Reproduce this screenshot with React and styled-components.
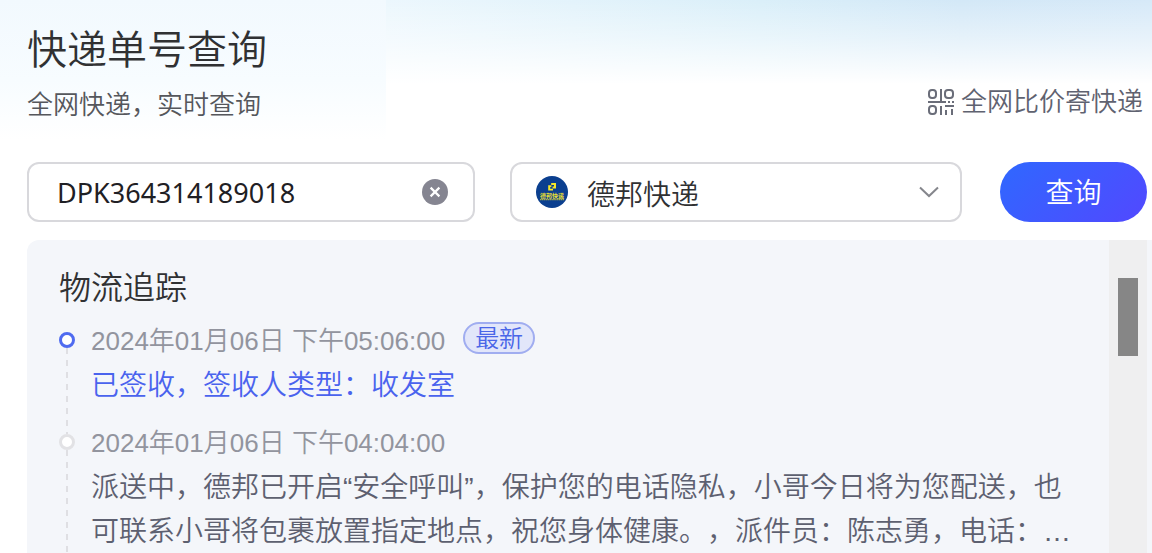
import React, { useState } from "react";
import styled, { createGlobalStyle, css } from "styled-components";

const GlobalStyle = createGlobalStyle`
  *, *::before, *::after { box-sizing: border-box; }
  body {
    margin: 0;
    background: #fff;
    color: #303133;
    font-family: "Liberation Sans", "Noto Sans CJK SC", sans-serif;
    font-weight: 350;
    text-spacing-trim: space-all;
  }
  h1, h2, p, ol { margin: 0; padding: 0; font-weight: inherit; }
  input, select, button { font: inherit; color: inherit; }
`;

const Page = styled.main`
  display: flex;
  flex-direction: column;
  height: 100vh;
  min-height: 480px;
  overflow: hidden;
  padding-left: 27px;
  background:
    linear-gradient(180deg, #f2f9fe 0, #f7fcff 80px, #fff 140px) 0 0 / 386px 140px no-repeat,
    linear-gradient(180deg, rgba(255, 255, 255, 0) 0, rgba(255, 255, 255, 0.45) 40px, #fff 84px) 386px 0 / 100% 140px no-repeat,
    linear-gradient(90deg, #fff 0, #ecf7fd 386px, #daeff9 760px, #d3e8f7 960px, #d6e9f8 100%) 0 0 / 100% 84px no-repeat,
    #fff;
`;

const Header = styled.header`
  display: flex;
  justify-content: space-between;
  align-items: flex-end;
  height: 124px;
  padding-right: 9px;
`;

const Title = styled.h1`
  font-size: 40px;
  line-height: 60px;
`;

const Subtitle = styled.p`
  margin-top: 6px;
  font-size: 26px;
  line-height: 38px;
  color: #55575c;
`;

const CompareLink = styled.a`
  display: flex;
  align-items: center;
  gap: 6px;
  padding-bottom: 3px;
  font-size: 26px;
  line-height: 38px;
  color: #5f6270;
  text-decoration: none;
`;

const SearchForm = styled.form`
  display: flex;
  gap: 38px;
  margin-top: 38px;
  padding-right: 5px;
`;

const Fields = styled.div`
  display: grid;
  grid-template-columns: minmax(0, 448fr) minmax(0, 452fr);
  flex: 1;
  gap: 35px;
`;

const Field = styled.div`
  display: flex;
  align-items: center;
  height: 60px;
  padding: 0 ${(p) => p.$right}px 0 ${(p) => p.$left}px;
  border: 2px solid #d8d8dc;
  border-radius: 12px;
  background: #fff;
`;

const NumberInput = styled.input`
  flex: 1;
  min-width: 0;
  padding: 0;
  border: 0;
  outline: 0;
  background: none;
  color: #1f2024;
  font-family: "Noto Sans", sans-serif;
  font-size: 27px;
  font-weight: 400;
`;

const ClearButton = styled.button`
  display: flex;
  padding: 0;
  border: 0;
  background: none;
  cursor: pointer;
`;

const CarrierSelect = styled.select`
  flex: 1;
  min-width: 0;
  margin-left: 19px;
  padding: 6px 0 0;
  border: 0;
  outline: 0;
  appearance: none;
  background: none;
  font-size: 28px;
`;

const SubmitButton = styled.button`
  width: 147px;
  height: 60px;
  padding: 0 0 2px;
  border: 0;
  border-radius: 30px;
  background: linear-gradient(135deg, #2f68ff, #5248ff);
  color: #fff;
  font-size: 28px;
  cursor: pointer;
`;

const Panel = styled.section`
  display: flex;
  flex: 1;
  min-height: 0;
  margin-top: 18px;
  padding-right: 5px;
  overflow: hidden;
  border-top-left-radius: 12px;
  background: #f4f6fa;
`;

const Tracking = styled.div`
  display: flex;
  flex-direction: column;
  flex: 1;
  min-width: 0;
  padding: 24px 32px 0;
`;

const PanelTitle = styled.h2`
  font-size: 32px;
  line-height: 48px;
`;

const Timeline = styled.ol`
  display: flex;
  flex-direction: column;
  flex: 1;
  margin-top: 6px;
  list-style: none;
`;

const Event = styled.li`
  display: flex;
  gap: 16px;
  flex: ${(p) => (p.$last ? "1 0 auto" : "none")};
`;

const Rail = styled.div`
  display: flex;
  flex-direction: column;
  align-items: center;
  flex: none;
  width: 16px;
  margin-bottom: -14px;
  padding-top: 14px;
`;

const Dot = styled.span`
  flex: none;
  width: 16px;
  height: 16px;
  border: 3px solid ${(p) => (p.$active ? "#4f6bf0" : "#e2e2e5")};
  border-radius: 50%;
  background: #fff;
`;

const Dashes = styled.span`
  flex: 1;
  width: 2px;
  background: repeating-linear-gradient(180deg, #dfdfe3 0 6px, transparent 6px 12px);
`;

const EventBody = styled.div`
  flex: 1;
  min-width: 0;
  padding-bottom: 12px;
`;

const EventTime = styled.div`
  display: flex;
  align-items: center;
  gap: 18px;
  height: 40px;
  color: #92949e;
  font-size: 26px;
`;

const LatestBadge = styled.span`
  height: 32px;
  padding: 0 10px;
  border: 2px solid #a0adf0;
  border-radius: 16px;
  background: #e2e6fa;
  color: #4a66e8;
  font-size: 24px;
  line-height: 30px;
`;

const EventText = styled.p`
  margin-top: 6px;
  font-size: 28px;
  line-height: 44px;
  ${(p) =>
    p.$active
      ? css`
          color: #4a63ee;
        `
      : css`
          color: #5d6070;
        `}
`;

const ScrollTrack = styled.div`
  flex: none;
  width: 38px;
  padding: 38px 9px 0;
  background: #efeff0;
`;

const ScrollThumb = styled.div`
  height: 78px;
  background: #868686;
`;

function CodeIcon() {
  return (
    <svg width="28" height="28" viewBox="0 0 28 28" fill="none" stroke="#6a6d79" strokeWidth="2" aria-hidden="true">
      <rect x="2" y="2" width="7" height="8" rx="3" />
      <rect x="18" y="2" width="8" height="8" rx="3" />
      <rect x="2" y="18" width="7" height="8" rx="3" />
      <path d="M14 1v13M1 14h18M21 14h2M25 14h2M14 18v9M18 18h9M19 22v5M25 21v6" />
    </svg>
  );
}

function ClearIcon() {
  return (
    <svg width="26" height="26" viewBox="0 0 26 26" aria-hidden="true">
      <circle cx="13" cy="13" r="13" fill="#858591" />
      <path d="M8.6 8.6l8.8 8.8M17.4 8.6l-8.8 8.8" stroke="#fff" strokeWidth="2.2" />
    </svg>
  );
}

function CarrierLogo() {
  return (
    <svg width="32" height="32" viewBox="0 0 32 32" aria-hidden="true">
      <circle cx="16" cy="16" r="16" fill="#0b3f8f" />
      <path d="M15.2 7h4.8v5.4h-3.4v-1.8h1.4V9h-2.8zM17 14.6h-4.8V9.2h3.2V11h-1.2v1.7H17z" fill="#f5e829" />
      <text x="16" y="21.8" textAnchor="middle" fontSize="6" fontWeight="700" fill="#e8df35">德邦快递</text>
      <path d="M4 23.6h24" stroke="#a9b04e" strokeWidth="1.4" strokeDasharray="1.4 .5" />
    </svg>
  );
}

function ChevronIcon() {
  return (
    <svg width="20" height="12" viewBox="0 0 20 12" fill="none" stroke="#85868c" strokeWidth="2" aria-hidden="true">
      <path d="M1 1.5l9 8.5 9-8.5" />
    </svg>
  );
}

const events = [
  { time: "2024年01月06日 下午05:06:00", text: "已签收，签收人类型：收发室", latest: true },
  {
    time: "2024年01月06日 下午04:04:00",
    text: "派送中，德邦已开启“安全呼叫”，保护您的电话隐私，小哥今日将为您配送，也可联系小哥将包裹放置指定地点，祝您身体健康。，派件员：陈志勇，电话：…",
  },
];

export default function App() {
  const [number, setNumber] = useState("DPK364314189018");
  return (
    <>
      <GlobalStyle />
      <Page lang="zh-CN">
        <Header>
          <div>
            <Title>快递单号查询</Title>
            <Subtitle>全网快递，实时查询</Subtitle>
          </div>
          <CompareLink href="#compare">
            <CodeIcon />
            全网比价寄快递
          </CompareLink>
        </Header>
        <SearchForm onSubmit={(e) => e.preventDefault()}>
          <Fields>
            <Field $left={28} $right={25}>
              <NumberInput aria-label="快递单号" value={number} onChange={(e) => setNumber(e.target.value)} />
              <ClearButton type="button" aria-label="清除" onClick={() => setNumber("")}>
                <ClearIcon />
              </ClearButton>
            </Field>
            <Field $left={24} $right={21}>
              <CarrierLogo />
              <CarrierSelect aria-label="快递公司" defaultValue="deppon">
                <option value="deppon">德邦快递</option>
              </CarrierSelect>
              <ChevronIcon />
            </Field>
          </Fields>
          <SubmitButton type="submit">查询</SubmitButton>
        </SearchForm>
        <Panel>
          <Tracking>
            <PanelTitle>物流追踪</PanelTitle>
            <Timeline>
              {events.map((event, i) => (
                <Event key={event.time} $last={i === events.length - 1}>
                  <Rail>
                    <Dot $active={event.latest} />
                    <Dashes />
                  </Rail>
                  <EventBody>
                    <EventTime>
                      <time>{event.time}</time>
                      {event.latest && <LatestBadge>最新</LatestBadge>}
                    </EventTime>
                    <EventText $active={event.latest}>{event.text}</EventText>
                  </EventBody>
                </Event>
              ))}
            </Timeline>
          </Tracking>
          <ScrollTrack>
            <ScrollThumb />
          </ScrollTrack>
        </Panel>
      </Page>
    </>
  );
}
